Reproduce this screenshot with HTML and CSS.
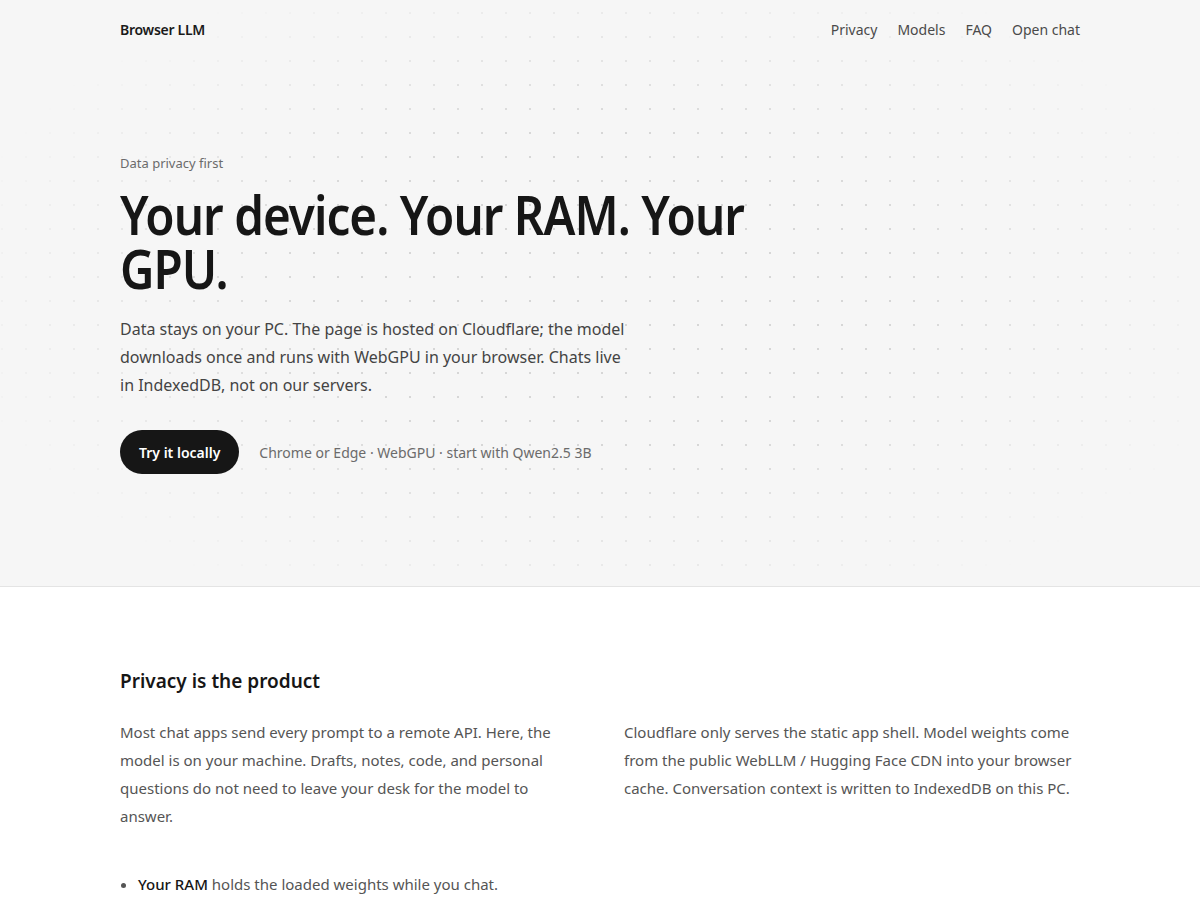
FILE: index.html
```html
<!DOCTYPE html>
<html lang="en">
<head>
<meta charset="utf-8">
<title>Browser LLM</title>
<link rel="stylesheet" href="styles.css">
</head>
<body>
<div class="hero-wrap">
  <div class="dots"></div>
  <header class="nav container">
    <a class="brand" href="#">Browser LLM</a>
    <nav class="links">
      <a href="#">Privacy</a>
      <a href="#">Models</a>
      <a href="#">FAQ</a>
      <a href="#">Open chat</a>
    </nav>
  </header>
  <section class="hero container">
    <p class="eyebrow">Data privacy first</p>
    <h1 class="title">Your device. Your RAM. Your GPU.</h1>
    <p class="lead">Data stays on your PC. The page is hosted on Cloudflare; the model downloads once and runs with WebGPU in your browser. Chats live in IndexedDB, not on our servers.</p>
    <div class="cta">
      <a class="btn" href="#">Try it locally</a>
      <span class="note">Chrome or Edge · WebGPU · start with Qwen2.5 3B</span>
    </div>
  </section>
</div>
<section class="privacy container">
  <h2 class="h2">Privacy is the product</h2>
  <div class="cols">
    <p>Most chat apps send every prompt to a remote API. Here, the model is on your machine. Drafts, notes, code, and personal questions do not need to leave your desk for the model to answer.</p>
    <p>Cloudflare only serves the static app shell. Model weights come from the public WebLLM / Hugging Face CDN into your browser cache. Conversation context is written to IndexedDB on this PC.</p>
  </div>
  <ul class="list">
    <li><strong>Your RAM</strong> holds the loaded weights while you chat.</li>
    <li><strong>Your GPU</strong> runs the model through WebGPU.</li>
  </ul>
</section>
</body>
</html>
```

FILE: styles.css
```css
* { box-sizing: border-box; }
html, body { margin: 0; padding: 0; }
body {
  font-family: "Noto Sans", "Open Sans", "DejaVu Sans", sans-serif;
  color: #1a1a1a;
  background: #ffffff;
}
a { color: inherit; text-decoration: none; }
.container { width: 960px; margin: 0 auto; }

.hero-wrap {
  position: relative;
  background: #f6f6f6;
  border-bottom: 1px solid #e4e4e4;
  overflow: hidden;
}
.dots {
  position: absolute;
  inset: 0;
  background-image: radial-gradient(circle at 2px 2px, #d6d6d6 1px, transparent 1.5px);
  background-size: 24px 24px;
  background-position: 0px 11px;
  -webkit-mask-image: radial-gradient(ellipse 55% 60% at 50% 50%, #000 45%, transparent 100%);
  mask-image: radial-gradient(ellipse 55% 60% at 50% 50%, #000 45%, transparent 100%);
  pointer-events: none;
}
.nav {
  position: relative;
  display: flex;
  justify-content: space-between;
  align-items: center;
  height: 59px;
  margin-bottom: 1px;
}
.brand { font-size: 14px; font-weight: 600; color: #1a1a1a; letter-spacing: -0.02em; }
.links { display: flex; gap: 20px; }
.links a { font-size: 14px; color: #4a4a4a; }

.hero { position: relative; padding: 94px 0 112px; }
.eyebrow { margin: 0 0 15px; font-size: 13px; color: #6b6b6b; }
.title {
  margin: 0;
  max-width: 760px;
  font-size: 54px;
  line-height: 54px;
  font-weight: 600;
  letter-spacing: -0.02em;
  color: #161616;
  transform: scaleX(0.88);
  transform-origin: left center;
}
.lead {
  margin: 20px 0 0;
  max-width: 510px;
  font-size: 16px;
  line-height: 28px;
  color: #444;
}
.cta { display: flex; align-items: center; gap: 20px; margin-top: 31px; }
.btn {
  display: inline-flex;
  align-items: center;
  height: 44px;
  padding: 0 19px;
  border-radius: 22px;
  background: #161616;
  color: #fff;
  font-size: 14px;
  font-weight: 600;
}
.note { font-size: 14px; color: #6b6b6b; }

.privacy { padding: 81px 0 40px; }
.h2 { margin: 0 0 24px; font-size: 19px; font-weight: 600; color: #161616; }
.cols { display: grid; grid-template-columns: 1fr 1fr; gap: 48px; }
.cols p { margin: 0; font-size: 15px; line-height: 28px; color: #555; }
.list { margin: 40px 0 0; padding-left: 18px; }
.list li { font-size: 15px; line-height: 28px; color: #555; }
.list strong { font-weight: 500; color: #161616; }
```
